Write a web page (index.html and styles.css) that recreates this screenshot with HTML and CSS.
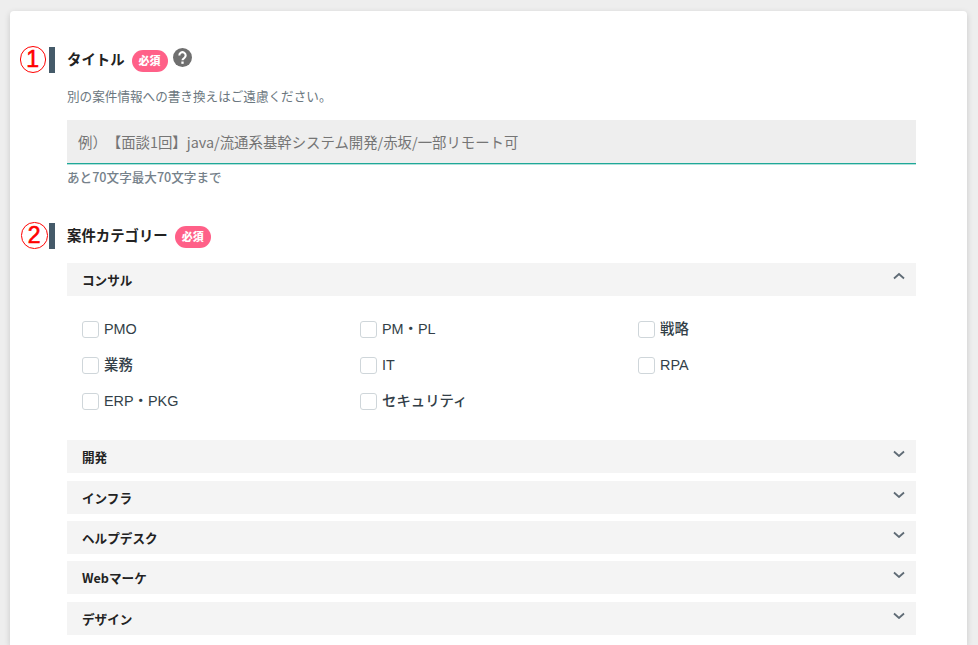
FILE: index.html
```html
<!DOCTYPE html>
<html lang="ja">
<head>
<meta charset="utf-8">
<title>案件登録</title>
<link rel="stylesheet" href="styles.css">
</head>
<body>
<main class="card">
  <span class="mark mark-one">1</span>
  <span class="mark mark-two">2</span>

  <section class="section section-title">
    <h2 class="heading">
      <span class="heading-text">タイトル</span><span class="badge">必須</span>
      <svg class="help" viewBox="0 0 18 18" aria-hidden="true"><circle cx="9" cy="9" r="9" fill="#6f6f6f"/><path d="M6 7a3 3 0 1 1 4.6 2.5c-1.1.7-1.6 1.1-1.6 2.2" fill="none" stroke="#fff" stroke-width="2"/><rect x="7.9" y="12.8" width="2.2" height="2.2" fill="#fff"/></svg>
    </h2>
    <div class="body">
      <p class="note">別の案件情報への書き換えはご遠慮ください。</p>
      <div class="input">例）【面談1回】java/流通系基幹システム開発/赤坂/一部リモート可</div>
      <p class="count">あと70文字最大70文字まで</p>
    </div>
  </section>

  <section class="section section-category">
    <h2 class="heading"><span class="heading-text">案件カテゴリー</span><span class="badge">必須</span></h2>
    <div class="body">
      <div class="acc-head acc-open">コンサル
        <svg class="chev" viewBox="0 0 12 8" aria-hidden="true"><path d="M1 6.5 6 2l5 4.500" fill="none" stroke="#5f6b75" stroke-width="1.800"/></svg>
      </div>
      <div class="options">
        <label class="opt"><i class="box"></i>PMO</label>
        <label class="opt"><i class="box"></i>PM・PL</label>
        <label class="opt"><i class="box"></i>戦略</label>
        <label class="opt"><i class="box"></i>業務</label>
        <label class="opt"><i class="box"></i>IT</label>
        <label class="opt"><i class="box"></i>RPA</label>
        <label class="opt"><i class="box"></i>ERP・PKG</label>
        <label class="opt"><i class="box"></i>セキュリティ</label>
      </div>
      <div class="acc-head">開発<svg class="chev" viewBox="0 0 12 8" aria-hidden="true"><path d="M1 2.500 6 7l5-4.500" fill="none" stroke="#5f6b75" stroke-width="1.800"/></svg></div>
      <div class="acc-head">インフラ<svg class="chev" viewBox="0 0 12 8" aria-hidden="true"><path d="M1 2.500 6 7l5-4.500" fill="none" stroke="#5f6b75" stroke-width="1.800"/></svg></div>
      <div class="acc-head">ヘルプデスク<svg class="chev" viewBox="0 0 12 8" aria-hidden="true"><path d="M1 2.500 6 7l5-4.500" fill="none" stroke="#5f6b75" stroke-width="1.800"/></svg></div>
      <div class="acc-head">Webマーケ<svg class="chev" viewBox="0 0 12 8" aria-hidden="true"><path d="M1 2.500 6 7l5-4.500" fill="none" stroke="#5f6b75" stroke-width="1.800"/></svg></div>
      <div class="acc-head">デザイン<svg class="chev" viewBox="0 0 12 8" aria-hidden="true"><path d="M1 2.500 6 7l5-4.500" fill="none" stroke="#5f6b75" stroke-width="1.800"/></svg></div>
    </div>
  </section>
</main>
</body>
</html>
```
FILE: styles.css
```css
* { box-sizing: border-box; }
html, body { height: 100%; }
body {
  margin: 0;
  background: #eeeeee;
  overflow: hidden;
  font-family: "Noto Sans CJK JP", "Noto Sans", sans-serif;
  text-spacing-trim: space-all;
  color: #222;
}
.card {
  position: relative;
  width: 957px;
  height: 634px;
  margin: 11px 0 0 10px;
  padding: 36px 51px 0 39px;
  background: #fff;
  border-radius: 4px 4px 0 0;
  box-shadow: 0 2px 6px rgba(0, 0, 0, .16);
}
.mark {
  position: absolute;
  display: flex;
  align-items: center;
  justify-content: center;
  width: 26.500px;
  height: 26.500px;
  border: 1px solid #ff0000;
  border-radius: 50%;
  color: #ff0000;
  font-family: "Liberation Sans", sans-serif;
  font-size: 23px;
  font-weight: 400;
  line-height: 1;
  -webkit-text-stroke: .6px #ff0000;
}
.mark-one { left: 9.500px; top: 35px; }
.mark-two { left: 11px; top: 211px; }
.heading {
  display: flex;
  align-items: center;
  height: 26px;
  margin: 0;
  padding-left: 12px;
  border-left: 6px solid #455a69;
  font-size: 14.400px;
  font-weight: 700;
  line-height: 26px;
  color: #222;
}
.heading-text { margin-top: -2px; }
.badge {
  display: flex;
  align-items: center;
  justify-content: center;
  width: 36px;
  height: 22px;
  margin: 1px 0 0 7px;
  border-radius: 11px;
  background: #ff6088;
  color: #fff;
  font-size: 11px;
  font-weight: 900;
  line-height: 1;
}
.help { width: 19px; height: 19px; margin: -6px 0 0 5px; }
.body { margin-left: 18px; }
.note {
  margin: 13px 0 0;
  font-size: 12.600px;
  line-height: 20px;
  color: #6b7780;
}
.input {
  height: 44px;
  margin-top: 14px;
  padding-left: 11px;
  background: #eeeeee;
  border-bottom: 1px solid #1fa898;
  box-shadow: 0 1px 0 rgba(31, 168, 152, .35);
  font-size: 14.400px;
  line-height: 43px;
  color: #757575;
}
.count {
  margin: 3px 0 0;
  font-size: 12.600px;
  font-weight: 500;
  line-height: 20px;
  color: #75818a;
}
.section-category { margin-top: 36px; }
.section-category .body { padding-top: 14px; }
.acc-head {
  display: flex;
  align-items: center;
  justify-content: space-between;
  height: 33px;
  margin-bottom: 7.330px;
  padding: 0 11px 0 15px;
  background: #f4f4f4;
  font-size: 12.600px;
  font-weight: 700;
  color: #222;
}
.chev { width: 12px; height: 8px; margin-top: -7px; }
.options {
  display: grid;
  grid-template-columns: repeat(3, 278px);
  grid-auto-rows: 36px;
  margin: -7.330px 0 0;
  padding: 15px 15px 21.200px;
}
.opt {
  display: flex;
  align-items: center;
  font-family: "Liberation Sans", "Noto Sans CJK JP", sans-serif;
  font-size: 14.400px;
  font-weight: 500;
  line-height: 18px;
  color: #333f48;
}
.box {
  width: 17px;
  height: 17px;
  margin-right: 5px;
  background: #fff;
  border: 1px solid #cfd6da;
  border-radius: 3px;
}
```
